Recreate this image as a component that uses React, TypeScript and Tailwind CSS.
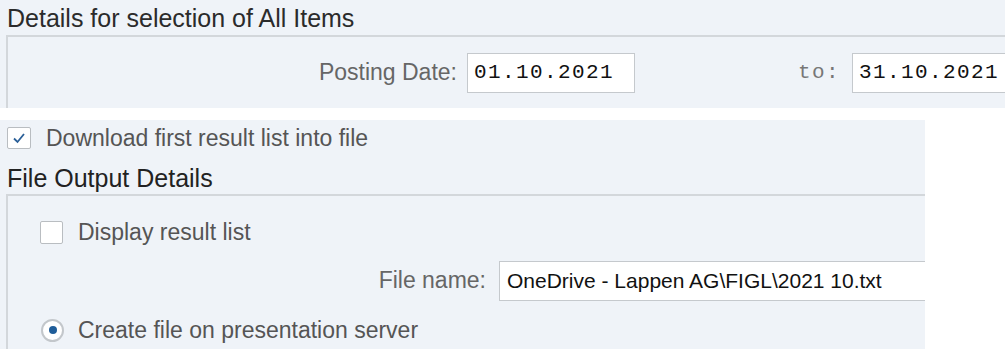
export default function App() {
  const sans = { fontFamily: '"Liberation Sans", Arial, sans-serif' };
  return (
    <div className="w-[1005px] h-[349px] overflow-hidden bg-white text-[#333]" style={sans}>
      {/* top: selection details */}
      <div className="h-[108px] bg-[#eff3f8] flex flex-col">
        <div className="h-[35px] pl-[7px] pt-[4px] text-[25px] leading-[28px] text-[#2b2b2b]">
          Details for selection of All Items
        </div>
        <div className="flex-1 ml-[6px] border-l-2 border-t-2 border-[#d3d7db] flex items-start pt-[16px]">
          <div className="w-[459px] text-right pr-[10px] text-[23px] leading-[39px] text-[#666]">
            Posting Date:
          </div>
          <div className="w-[168px] h-[40px] bg-white border border-[#c5c9cd] flex items-center pl-[6px] text-[21px] tracking-[1.4px] text-[#111] font-['Liberation_Mono',monospace]">
            01.10.2021
          </div>
          <div className="w-[217px] text-right pr-[12px] text-[21px] leading-[40px] tracking-[1.4px] text-[#777] font-['Liberation_Mono',monospace]">
            to:
          </div>
          <div className="flex-1 h-[40px] bg-white border border-[#c5c9cd] border-r-0 flex items-center pl-[6px] text-[21px] tracking-[1.4px] text-[#111] font-['Liberation_Mono',monospace]">
            31.10.2021
          </div>
        </div>
      </div>

      {/* bottom: file output */}
      <div className="mt-[12px] w-[925px] h-[229px] bg-[#eff3f8] flex flex-col">
        <div className="h-[34px] flex items-center pl-[7px] gap-[15px] pt-[2px]">
          <div className="w-[24px] h-[22px] bg-white border border-[#b9bdc1] rounded-[2px] flex items-center justify-center">
            <svg width="14" height="12" viewBox="0 0 14 12" fill="none">
              <path d="M2 6.5 L5.5 10 L12 2" stroke="#2a5f98" strokeWidth="1.8" />
            </svg>
          </div>
          <span className="text-[23px] text-[#555]">Download first result list into file</span>
        </div>
        <div className="h-[40px] pl-[7px] pt-[10px] text-[25px] leading-[28px] text-[#222]">
          File Output Details
        </div>
        <div className="flex-1 ml-[6px] border-l-2 border-t-2 border-[#d3d7db] flex flex-col">
          <div className="h-[54px] flex items-end pl-[32px] gap-[15px] pb-[4px]">
            <div className="w-[23px] h-[23px] bg-white border border-[#b9bdc1] rounded-[2px] mb-[2px]" />
            <span className="text-[23px] text-[#555] leading-[28px]">Display result list</span>
          </div>
          <div className="h-[60px] flex items-center pt-[1px]">
            <div className="w-[491px] text-right pr-[13px] text-[23px] text-[#666]">File name:</div>
            <div className="flex-1 h-[40px] bg-white border border-[#c5c9cd] border-r-0 flex items-center pl-[7px] text-[21px] text-[#111]">
              OneDrive - Lappen AG\FIGL\2021 10.txt
            </div>
          </div>
          <div className="h-[36px] flex items-center pl-[33px] gap-[14px] pt-[4px]">
            <div className="w-[23px] h-[23px] rounded-full bg-white border-2 border-[#c3c7cb] flex items-center justify-center">
              <div className="w-[8px] h-[8px] rounded-full bg-[#1f5d99]" />
            </div>
            <span className="text-[23px] text-[#555]">Create file on presentation server</span>
          </div>
        </div>
      </div>
    </div>
  );
}
